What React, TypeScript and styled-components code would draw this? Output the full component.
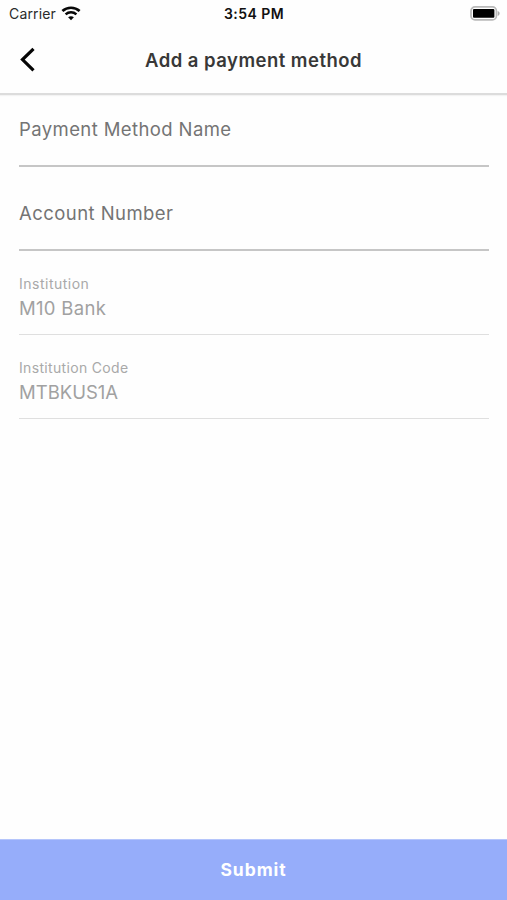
import React from "react";
import styled, { createGlobalStyle } from "styled-components";

const GlobalStyle = createGlobalStyle`
  * { box-sizing: border-box; }
  body { margin: 0; background: #fefefe; }
`;

const Screen = styled.main`
  height: 900px;
  display: flex;
  flex-direction: column;
  background: #fefefe;
  font-family: Inter, "Liberation Sans", sans-serif;
  white-space: nowrap;
`;

const StatusBar = styled.div`
  height: 28px;
  padding: 0 7px 0 9px;
  display: grid;
  grid-template-columns: 1fr auto 1fr;
  align-items: center;
  font: 400 14px/28px Inter, sans-serif;
  color: #2b2b2b;
`;

const Carrier = styled.div`
  display: flex;
  align-items: center;
  gap: 5px;
  letter-spacing: 0.15px;
  svg { margin-top: -2px; }
`;

const Clock = styled.div`
  font-weight: 600;
  letter-spacing: 0.45px;
  margin-right: 1px;
  color: #111;
`;

const Battery = styled.svg`
  justify-self: end;
  margin-top: -1px;
`;

const Header = styled.header`
  height: 67px;
  padding-bottom: 1px;
  display: grid;
  grid-template-columns: 57px 1fr 57px;
  align-items: center;
  border-bottom: 2px solid #dcdcdc;
  box-shadow: 0 1px 1px #f3f3f3;
`;

const BackButton = styled.button`
  height: 48px;
  padding: 0 0 0 19px;
  border: 0;
  background: none;
  display: flex;
  align-items: center;
`;

const Title = styled.h1`
  margin: -1px 0 0;
  text-align: center;
  font-size: 18.5px;
  line-height: 24px;
  font-weight: 600;
  letter-spacing: 0.47px;
  color: #383838;
`;

const Form = styled.form`
  flex: 1;
  padding: 0 18px 0 19px;
`;

const Field = styled.div<{ $disabled?: boolean }>`
  height: 84px;
  padding-top: ${(p) => (p.$disabled ? 24 : 34)}px;
  border-bottom: ${(p) => (p.$disabled ? "1px solid #dfdfdf" : "2px solid #c6c6c6")};

  &:first-child {
    height: 72px;
    padding-top: 22px;
  }
`;

const Label = styled.label<{ $spacing: number; $small?: boolean }>`
  display: block;
  font-size: ${(p) => (p.$small ? 14 : 18.5)}px;
  line-height: ${(p) => (p.$small ? 18 : 25)}px;
  letter-spacing: ${(p) => p.$spacing}px;
  color: ${(p) => (p.$small ? "#a9a9a9" : "#747474")};
`;

const Value = styled.div<{ $spacing: number }>`
  margin-top: 3px;
  font-size: 18.5px;
  line-height: 25px;
  letter-spacing: ${(p) => p.$spacing}px;
  color: #a1a1a1;
`;

const Submit = styled.button`
  height: 61px;
  border: 0;
  border-top: 1px solid #b5c5fb;
  padding: 0;
  background: #96adfa;
  color: #fff;
  font: 700 17.5px/24px Inter, sans-serif;
  letter-spacing: 0.95px;
`;

export default function App() {
  return (
    <Screen>
      <GlobalStyle />
      <StatusBar>
        <Carrier>
          Carrier
          <svg width="20" height="15" viewBox="0 0 20 15" fill="none" stroke="#080808">
            <path d="M1.4 5.1C6.3.6 13.7.6 18.6 5.1" strokeWidth="2.7" />
            <path d="M4.6 8.4C7.7 5.6 12.3 5.6 15.4 8.4" strokeWidth="2.5" />
            <path d="M10 14.3 7.1 11.3C8.8 9.8 11.2 9.8 12.9 11.3Z" fill="#080808" stroke="none" />
          </svg>
        </Carrier>
        <Clock>3:54 PM</Clock>
        <Battery width="31" height="15" viewBox="0 0 31 15">
          <rect x="2" y="0.9" width="25.4" height="13" rx="4" fill="#fff" stroke="#b9b9b9" strokeWidth="1.7" />
          <rect x="4" y="3" width="21.4" height="8.8" rx="1" fill="#000" />
          <path d="M28.7 5.1c2.6 1 2.6 3.8 0 4.8Z" fill="#ababab" />
        </Battery>
      </StatusBar>
      <Header>
        <BackButton aria-label="Back">
          <svg width="18" height="26" viewBox="0 0 18 26" fill="none" stroke="#050505" strokeWidth="3.2">
            <path d="M14.5 1.8 3.5 12.6l11 10.8" />
          </svg>
        </BackButton>
        <Title>Add a payment method</Title>
      </Header>
      <Form>
        <Field><Label $spacing={0.4}>Payment Method Name</Label></Field>
        <Field><Label $spacing={0.44}>Account Number</Label></Field>
        <Field $disabled>
          <Label $small $spacing={0.5}>Institution</Label>
          <Value $spacing={0.3}>M10 Bank</Value>
        </Field>
        <Field $disabled>
          <Label $small $spacing={0.33}>Institution Code</Label>
          <Value $spacing={0}>MTBKUS1A</Value>
        </Field>
      </Form>
      <Submit>Submit</Submit>
    </Screen>
  );
}
